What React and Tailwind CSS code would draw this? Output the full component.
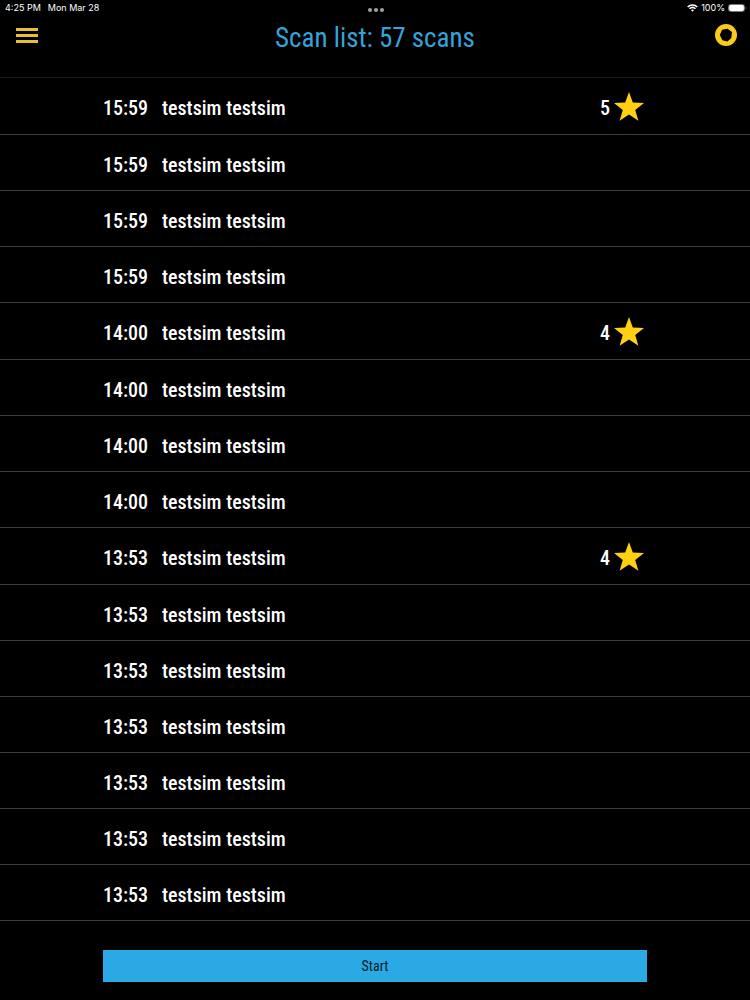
import { useState } from 'react'

const SCANS = [
  { time: '15:59', name: 'testsim testsim', stars: 5 },
  { time: '15:59', name: 'testsim testsim' },
  { time: '15:59', name: 'testsim testsim' },
  { time: '15:59', name: 'testsim testsim' },
  { time: '14:00', name: 'testsim testsim', stars: 4 },
  { time: '14:00', name: 'testsim testsim' },
  { time: '14:00', name: 'testsim testsim' },
  { time: '14:00', name: 'testsim testsim' },
  { time: '13:53', name: 'testsim testsim', stars: 4 },
  { time: '13:53', name: 'testsim testsim' },
  { time: '13:53', name: 'testsim testsim' },
  { time: '13:53', name: 'testsim testsim' },
  { time: '13:53', name: 'testsim testsim' },
  { time: '13:53', name: 'testsim testsim' },
  { time: '13:53', name: 'testsim testsim' },
]

const TOTAL = 57

function Star() {
  return (
    <svg viewBox="0 0 30 29" className="h-[29px] w-[30px]" fill="#ffd112" aria-hidden="true">
      <path d="M15 0 18.8 10.5 30 10.9 21.2 17.9 24.4 28.7 15 22.4 5.6 28.7 8.8 17.9 0 10.9 11.2 10.5Z" />
    </svg>
  )
}

function WifiIcon() {
  return (
    <svg viewBox="0 0 20 15" className="h-2 w-[11px]" fill="none" stroke="white" strokeWidth="2.8" aria-hidden="true">
      <path d="M1 5.5C6 .4 14 .4 19 5.5" />
      <path d="M4.4 9C7.6 5.9 12.4 5.9 15.6 9" />
      <path d="M7 11.3C8.7 9.7 11.3 9.7 13 11.3L10 14.5Z" fill="white" stroke="none" />
    </svg>
  )
}

function BatteryIcon() {
  return (
    <svg viewBox="0 0 19 8" className="h-2 w-[19px]" aria-hidden="true">
      <rect x=".5" y=".5" width="16" height="7" rx="2.2" fill="none" stroke="#777" />
      <rect x="1.1" y="1.1" width="14.8" height="5.8" rx="1.4" fill="white" />
      <path d="M17.6 2.8c1 .3 1 2.1 0 2.4Z" fill="#888" />
    </svg>
  )
}

function StatusBar() {
  return (
    <div className="grid h-4 grid-cols-3 items-center pr-[3px] pl-[5px] font-['Inter','Liberation_Sans',sans-serif] text-[9px] text-white">
      <div className="flex gap-[7px]">
        <span>4:25 PM</span>
        <span>Mon Mar 28</span>
      </div>
      <div className="flex justify-center gap-[2px] pt-1">
        <span className="size-1 rounded-full bg-[#a0a0a0]" />
        <span className="size-1 rounded-full bg-[#a0a0a0]" />
        <span className="size-1 rounded-full bg-[#a0a0a0]" />
      </div>
      <div className="flex items-center justify-end gap-[3px]">
        <WifiIcon />
        <span>100%</span>
        <BatteryIcon />
      </div>
    </div>
  )
}

function ScanRow({ scan }) {
  return (
    <li className={`border-b border-[#3c3c3e] ${scan.stars ? 'h-[57px]' : 'h-14'}`}>
      <div className="mx-[103px] flex h-full items-center pt-1 text-[20px] font-medium text-white">
        <span className="w-[59px]">{scan.time}</span>
        <span>{scan.name}</span>
        {scan.stars && (
          <span className="ml-auto flex items-center gap-1 pr-[3px]">
            {scan.stars}
            <span className="pb-1">
              <Star />
            </span>
          </span>
        )}
      </div>
    </li>
  )
}

export default function App() {
  const [running, setRunning] = useState(false)

  return (
    <div className="flex min-h-screen flex-col bg-black font-['Roboto_Condensed','Liberation_Sans_Narrow',sans-serif]">
      <StatusBar />
      <header className="flex h-[61px] items-start justify-between px-3">
        <button type="button" aria-label="Menu" className="flex w-[30px] justify-center pt-3">
          <svg viewBox="0 0 22 15" className="h-[15px] w-[22px]" aria-hidden="true">
            <path d="M0 0h22v3H0zM0 6h22v3H0zM0 12h22v3H0z" fill="#e5c22d" />
          </svg>
        </button>
        <h1 className="pt-1 text-[27px] leading-9 text-[#35a4d9]">Scan list: {TOTAL} scans</h1>
        <button type="button" aria-label="Scanner" className="flex w-[30px] justify-end pt-2 pr-px">
          <svg viewBox="0 0 22 22" className="size-[22px]" aria-hidden="true">
            <path
              d="M11 0a11 11 0 1 1 0 22a11 11 0 1 1 0-22ZM12.6 4.7 7.1 5.8 4.8 11 7.4 16.2 12.4 17.4 16.3 13.9 17 8Z"
              fill="#f9cc17"
              fillRule="evenodd"
            />
          </svg>
        </button>
      </header>
      <ul className="border-t border-[#1c1c1e]">
        {SCANS.map((scan, i) => (
          <ScanRow key={i} scan={scan} />
        ))}
      </ul>
      <footer className="mx-[103px] pt-[29px] pb-[18px]">
        <button
          type="button"
          aria-pressed={running}
          onClick={() => setRunning(r => !r)}
          className="h-8 w-full bg-[#2aa9e4] pt-px text-[14px] text-[#0b1c26]"
        >
          Start
        </button>
      </footer>
    </div>
  )
}
